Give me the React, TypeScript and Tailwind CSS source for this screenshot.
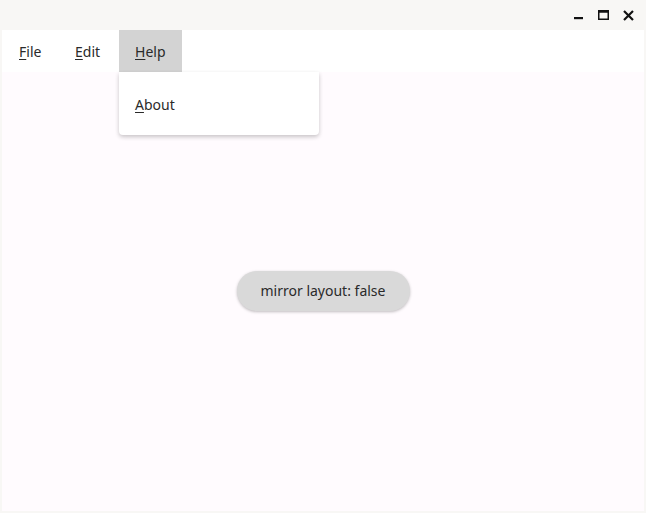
import { useState } from 'react'

const MENUS = [
  { label: 'File', width: 'w-[56px]' },
  { label: 'Edit', width: 'w-[60px]' },
  { label: 'Help', width: 'w-[63px]' },
]

function Mnemonic({ label }: { label: string }) {
  return (
    <>
      <span className="underline underline-offset-2">{label[0]}</span>
      {label.slice(1)}
    </>
  )
}

export default function App() {
  const [open] = useState<string>('Help')
  const [mirror, setMirror] = useState(false)

  return (
    <div className="flex h-[513px] w-[646px] flex-col bg-[#f8f7f5] font-['Noto_Sans',sans-serif] text-[14px] text-[#2a2a2a]">
      {/* title bar */}
      <div className="flex h-[30px] shrink-0 items-center justify-end gap-[14px] pr-[12px]">
        <svg width="10" height="10" viewBox="0 0 10 10">
          <rect x="0" y="7" width="9" height="2.2" fill="#111" />
        </svg>
        <svg width="11" height="10" viewBox="0 0 11 10">
          <rect x="0.75" y="0.75" width="9.5" height="8.5" fill="none" stroke="#111" strokeWidth="1.5" />
          <rect x="0.75" y="0.75" width="9.5" height="2" fill="#111" />
        </svg>
        <svg width="11" height="11" viewBox="0 0 11 11">
          <path d="M1 1 L10 10 M10 1 L1 10" stroke="#111" strokeWidth="2.2" />
        </svg>
      </div>

      <div className="mx-[2px] mb-[2px] flex flex-1 flex-col bg-[#fffbfe]">
        {/* menu bar */}
        <div className="relative flex h-[42px] shrink-0 bg-white pl-px">
          {MENUS.map((m) => (
            <div
              key={m.label}
              className={`relative flex items-center pl-4 ${m.width} ${open === m.label ? 'bg-[#d3d3d3]' : ''}`}
            >
              <Mnemonic label={m.label} />
              {open === m.label && (
                <div className="absolute left-0 top-[42px] z-10 flex h-[63px] w-[200px] items-center rounded-b-[4px] bg-white px-4 pt-px shadow-[0_2px_4px_rgba(0,0,0,0.22)]">
                  <Mnemonic label="About" />
                </div>
              )}
            </div>
          ))}
        </div>

        {/* content */}
        <div className="flex flex-1 items-center justify-center pb-[2px]">
          <button
            type="button"
            onClick={() => setMirror((v) => !v)}
            className="h-[40px] w-[173px] rounded-full bg-[#d9d9d9] text-center shadow-[0_1px_3px_rgba(0,0,0,0.25)]"
          >
            mirror layout: {mirror ? 'true' : 'false'}
          </button>
        </div>
      </div>
    </div>
  )
}
